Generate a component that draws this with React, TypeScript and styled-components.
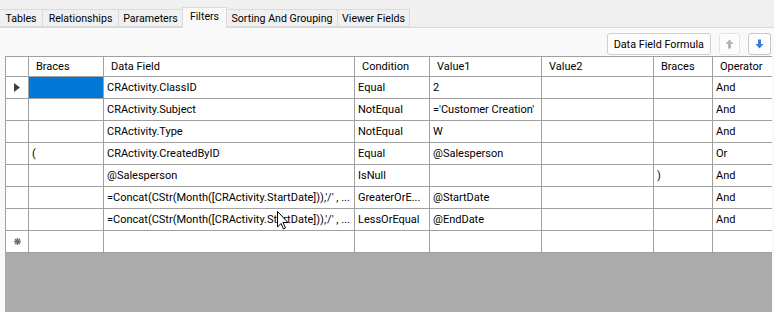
import styled, { createGlobalStyle } from "styled-components";

const GlobalStyle = createGlobalStyle`
  html, body {
    margin: 0;
    padding: 0;
    background: #f9f9f9;
    font-family: Roboto, "Liberation Sans", Arial, sans-serif;
    font-size: 11px;
    color: #000;
    overflow: hidden;
  }
`;

const Window = styled.div`
  width: 774px;
  height: 312px;
  display: flex;
  flex-direction: column;
  background: #f9f9f9;
  position: relative;
`;

const TabStrip = styled.div`
  display: flex;
  align-items: flex-end;
  height: 27px;
  background: #f0f0f0;
  border-bottom: 1px solid #dadada;
`;

const Tab = styled.div<{ $active?: boolean; $w: number }>`
  width: ${(p) => p.$w}px;
  height: ${(p) => (p.$active ? 21 : 18)}px;
  margin-bottom: ${(p) => (p.$active ? -1 : 0)}px;
  padding-bottom: ${(p) => (p.$active ? 3 : 0)}px;
  display: flex;
  align-items: center;
  justify-content: center;
  box-sizing: border-box;
  font-size: 10.6px;
  background: ${(p) => (p.$active ? "#f9f9f9" : "#f0f0f0")};
  border: 1px solid #dadada;
  border-bottom: ${(p) => (p.$active ? "none" : "1px solid #dadada")};
  margin-left: -1px;
  white-space: nowrap;
  &:first-child {
    margin-left: 0;
    border-left: none;
  }
`;

const Toolbar = styled.div`
  display: flex;
  justify-content: flex-end;
  align-items: center;
  gap: 8px;
  height: 22px;
  margin: 5px 3px 1px 0;
`;

const Button = styled.button`
  height: 22px;
  padding: 0 6px;
  background: #fdfdfd;
  border: 1px solid #d0d0d0;
  border-radius: 3px;
  font: inherit;
  font-size: 10.8px;
  color: #000;
  display: flex;
  align-items: center;
  justify-content: center;
`;

const IconButton = styled(Button)<{ $disabled?: boolean }>`
  width: ${(p) => (p.$disabled ? 21 : 23)}px;
  padding: 0;
  border-color: ${(p) => (p.$disabled ? "#e4e4e4" : "#c8c8c8")};
`;

const GridBox = styled.div`
  margin-left: 5px;
  width: 767px;
  flex: 1;
  background: #ababab;
  overflow: hidden;
  position: relative;
`;

const Table = styled.table`
  border-collapse: collapse;
  table-layout: fixed;
  width: 767px;
  background: #fff;
`;

const HeadCell = styled.th`
  height: 19px;
  padding: 0 0 0 7px;
  border: 1px solid #a0a0a0;
  font-weight: normal;
  text-align: left;
  white-space: nowrap;
  overflow: hidden;
`;

const Cell = styled.td<{ $selected?: boolean }>`
  height: 21px;
  padding: 0 0 0 3px;
  border: 1px solid #a0a0a0;
  background: ${(p) => (p.$selected ? "#0078d7" : "#fff")};
  white-space: nowrap;
  overflow: hidden;
`;

const RowHead = styled.td`
  height: 21px;
  padding: 0;
  border: 1px solid #a0a0a0;
  background: #fff;
  text-align: center;
  vertical-align: middle;
  line-height: 0;
`;

const Cursor = styled.svg`
  position: absolute;
  left: 277px;
  top: 211px;
`;

const widths = [23, 75, 251, 75, 112, 112, 59, 60];
const headers = ["", "Braces", "Data Field", "Condition", "Value1", "Value2", "Braces", "Operator"];

const concat = "=Concat(CStr(Month([CRActivity.StartDate])),'/' , ...";

const rows: string[][] = [
  ["", "CRActivity.ClassID", "Equal", "2", "", "", "And"],
  ["", "CRActivity.Subject", "NotEqual", "='Customer Creation'", "", "", "And"],
  ["", "CRActivity.Type", "NotEqual", "W", "", "", "And"],
  ["(", "CRActivity.CreatedByID", "Equal", "@Salesperson", "", "", "Or"],
  ["", "@Salesperson", "IsNull", "", "", ")", "And"],
  ["", concat, "GreaterOrE...", "@StartDate", "", "", "And"],
  ["", concat, "LessOrEqual", "@EndDate", "", "", "And"],
  ["", "", "", "", "", "", ""],
];

const tabs: [string, number][] = [
  ["Tables", 43],
  ["Relationships", 77],
  ["Parameters", 65],
  ["Filters", 45],
  ["Sorting And Grouping", 112],
  ["Viewer Fields", 73],
];

const Arrow = ({ up, color }: { up?: boolean; color: string }) => (
  <svg width="9" height="10" viewBox="0 0 9 10">
    <path
      d={up ? "M4.5 0.5 L8.5 5 L6 5 L6 9.5 L3 9.5 L3 5 L0.5 5 Z" : "M3 0.5 L6 0.5 L6 5 L8.5 5 L4.5 9.5 L0.5 5 L3 5 Z"}
      fill={color}
    />
  </svg>
);

export default function App() {
  return (
    <Window>
      <GlobalStyle />
      <TabStrip>
        {tabs.map(([t, w]) => (
          <Tab key={t} $w={w} $active={t === "Filters"}>
            {t}
          </Tab>
        ))}
      </TabStrip>
      <Toolbar>
        <Button>Data Field Formula</Button>
        <IconButton $disabled>
          <Arrow up color="#b4b4b4" />
        </IconButton>
        <IconButton>
          <Arrow color="#3a7bd5" />
        </IconButton>
      </Toolbar>
      <GridBox>
        <Table>
          <colgroup>
            {widths.map((w, i) => (
              <col key={i} style={{ width: w }} />
            ))}
          </colgroup>
          <thead>
            <tr>
              {headers.map((h, i) => (
                <HeadCell key={i}>{h}</HeadCell>
              ))}
            </tr>
          </thead>
          <tbody>
            {rows.map((r, ri) => (
              <tr key={ri}>
                <RowHead>
                  {ri === 0 && (
                    <svg width="6" height="9" viewBox="0 0 6 9">
                      <path d="M0 0 L6 4.5 L0 9 Z" fill="#404040" />
                    </svg>
                  )}
                  {ri === rows.length - 1 && (
                    <svg width="7" height="7" viewBox="0 0 7 7">
                      <path d="M3.5 0 V7 M0 3.5 H7 M1 1 L6 6 M6 1 L1 6" stroke="#707070" strokeWidth="1.4" />
                    </svg>
                  )}
                </RowHead>
                {r.map((c, ci) => (
                  <Cell key={ci} $selected={ri === 0 && ci === 0}>
                    {c}
                  </Cell>
                ))}
              </tr>
            ))}
          </tbody>
        </Table>
      </GridBox>
      <Cursor width="12" height="19" viewBox="0 0 12 19">
        <path d="M0.5 0.5 L0.5 16 L4 12.5 L6.5 18 L8.5 17 L6 11.5 L11 11.5 Z" fill="#fff" stroke="#000" strokeWidth="1" />
      </Cursor>
    </Window>
  );
}
